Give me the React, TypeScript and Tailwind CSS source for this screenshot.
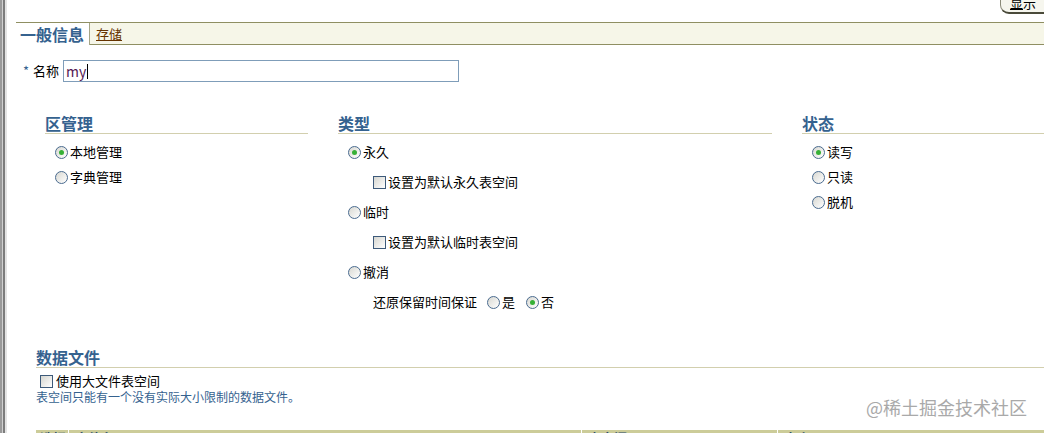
import type { ReactNode } from 'react'

function Radio({ checked }: { checked?: boolean }) {
  return (
    <span className="flex h-[13px] w-[13px] shrink-0 items-center justify-center rounded-full border border-[#4a6b8f] bg-linear-to-br from-[#d8d8d2] to-white">
      {checked && <span className="h-[5px] w-[5px] rounded-full bg-[#36b036]" />}
    </span>
  )
}

function Checkbox() {
  return (
    <span className="h-[13px] w-[13px] shrink-0 border border-[#3d5a7a] bg-linear-to-br from-[#d6d6d0] to-white" />
  )
}

function SectionTitle({ children }: { children: ReactNode }) {
  return (
    <div className="h-[21px] border-b border-[#d2cfae] text-[16px] font-bold leading-[20px] text-[#35628f]">
      {children}
    </div>
  )
}

function RadioRow({ label, checked }: { label: string; checked?: boolean }) {
  return (
    <div className="flex h-[20px] items-center gap-[2px]">
      <Radio checked={checked} />
      <span>{label}</span>
    </div>
  )
}

function CheckRow({ label }: { label: string }) {
  return (
    <div className="flex h-[20px] items-center gap-[2px] pl-[25px]">
      <Checkbox />
      <span>{label}</span>
    </div>
  )
}

export default function App() {
  return (
    <div className="relative flex h-[433px] w-[1044px] overflow-hidden bg-white font-['Noto_Sans_CJK_SC',sans-serif] text-[13px] leading-[20px] text-black">
      <div className="flex h-full w-[7px] shrink-0">
        <div className="w-[2px] bg-[#9a9a9a]" />
        <div className="w-[1px] bg-[#d0d0d0]" />
        <div className="w-[2px] bg-[#7c7c7c]" />
        <div className="w-[2px] bg-[#e4e4e4]" />
      </div>

      <div className="min-w-0 flex-1">
        <div className="flex h-[22px] justify-end">
          <div className="-mr-[20px] -mt-[8px] flex h-[22px] w-[64px] items-end rounded-[9px] border border-[#8a8a78] border-b-2 border-b-[#4a4a3a] bg-[#f6f6ee] pb-[1px] pl-[9px] text-[13px] leading-[16px]">
            <span className="underline">显</span>
            <span>示</span>
          </div>
        </div>

        <div className="ml-[9px] flex h-[23px] border-t border-[#8f8f62] bg-[#f6f6e8]">
          <div className="w-[74px] border-r border-[#a5a586] bg-white pl-[4px] text-[16px] font-bold leading-[22px] text-[#35628f]">
            一般信息
          </div>
          <div className="border-b border-[#8f8f62] pl-[6px] pr-[6px] text-[13px] leading-[22px] text-[#663300] underline">
            存储
          </div>
          <div className="flex-1 border-b border-[#8f8f62]" />
        </div>

        <div className="ml-[16px] mt-[15px] flex h-[22px] items-center">
          <span className="w-[10px] text-[#35628f]">*</span>
          <span>名称</span>
          <div className="ml-[4px] flex h-[22px] w-[396px] items-center border border-[#7f9db9] pl-[2px] text-[14px] text-[#551a55]">
            my<span className="ml-px h-[15px] w-px bg-black" />
          </div>
        </div>

        <div className="ml-[38px] mt-[31px] flex">
          <div className="w-[263px]">
            <SectionTitle>区管理</SectionTitle>
            <div className="mt-[8px] flex flex-col gap-[5px] pl-[10px]">
              <RadioRow label="本地管理" checked />
              <RadioRow label="字典管理" />
            </div>
          </div>

          <div className="ml-[30px] w-[434px]">
            <SectionTitle>类型</SectionTitle>
            <div className="mt-[8px] flex flex-col gap-[10px] pl-[10px]">
              <RadioRow label="永久" checked />
              <CheckRow label="设置为默认永久表空间" />
              <RadioRow label="临时" />
              <CheckRow label="设置为默认临时表空间" />
              <RadioRow label="撤消" />
              <div className="flex h-[20px] items-center pl-[25px]">
                <span>还原保留时间保证</span>
                <span className="ml-[10px]">
                  <Radio />
                </span>
                <span className="ml-[2px]">是</span>
                <span className="ml-[11px]">
                  <Radio checked />
                </span>
                <span className="ml-[2px]">否</span>
              </div>
            </div>
          </div>

          <div className="ml-[30px] flex-1">
            <SectionTitle>状态</SectionTitle>
            <div className="mt-[8px] flex flex-col gap-[5px] pl-[10px]">
              <RadioRow label="读写" checked />
              <RadioRow label="只读" />
              <RadioRow label="脱机" />
            </div>
          </div>
        </div>

        <div className="ml-[29px] mt-[35px]">
          <SectionTitle>数据文件</SectionTitle>
          <div className="mt-[4px] flex h-[18px] items-center gap-[3px] pl-[4px] leading-[18px]">
            <Checkbox />
            <span>使用大文件表空间</span>
          </div>
          <div className="text-[12px] leading-[14px] text-[#35628f]">
            表空间只能有一个没有实际大小限制的数据文件。
          </div>
          <div className="mt-[26px] flex h-[20px] bg-[#cccc99] text-[13px] font-bold leading-[15px] text-[#2f4f6f]">
            <div className="w-[33px] border-r border-white pl-[4px]">选择</div>
            <div className="w-[513px] border-r border-white pl-[6px]">文件名</div>
            <div className="w-[196px] border-r border-white pl-[6px]">表空间</div>
            <div className="flex-1 pl-[6px]">大小</div>
          </div>
        </div>
      </div>

      <div className="absolute left-[866px] top-[396px] text-[18px] leading-[22px] text-[#a9a9a9]">
        @稀土掘金技术社区
      </div>
    </div>
  )
}
